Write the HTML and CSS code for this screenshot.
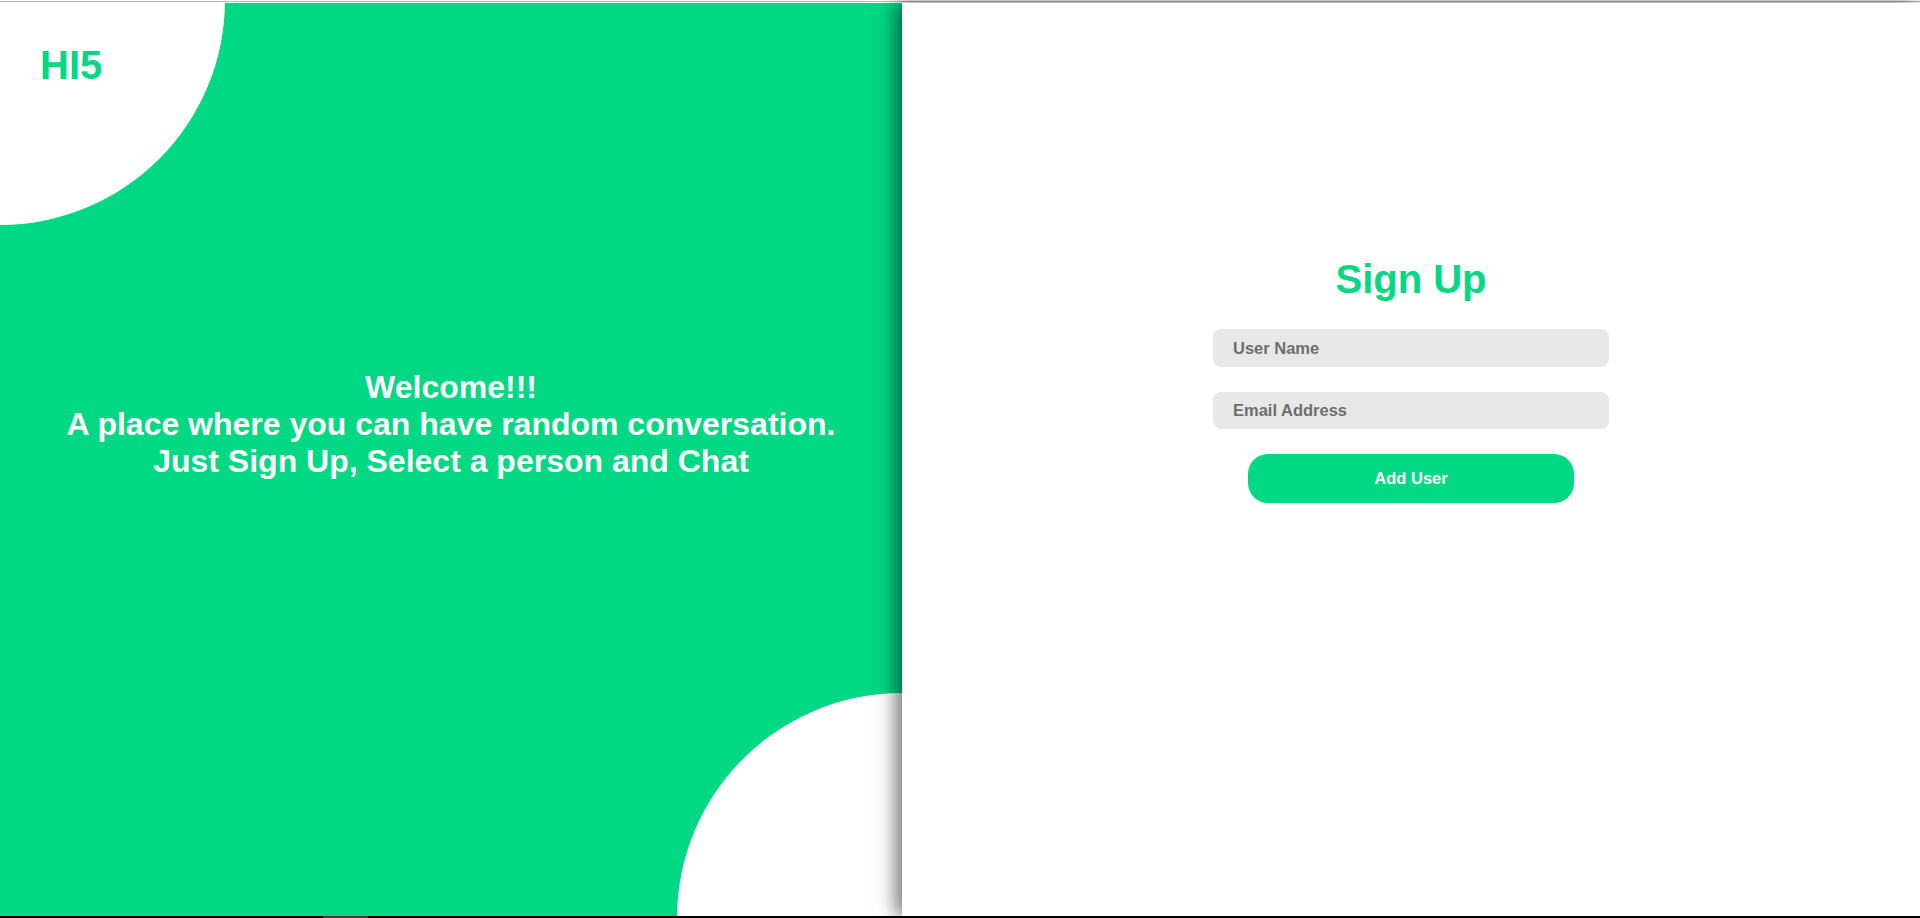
FILE: index.html
```html
<!DOCTYPE html>
<html lang="en">
<head>
<meta charset="utf-8">
<title>HI5 - Sign Up</title>
<link rel="stylesheet" href="styles.css">
</head>
<body>
<div class="topline"></div>
<main class="page">
  <section class="intro">
    <div class="blob blob-top"></div>
    <div class="blob blob-bottom"></div>
    <div class="logo">HI5</div>
    <h1 class="welcome">Welcome!!!<br>A place where you can have random conversation.<br>Just Sign Up, Select a person and Chat</h1>
  </section>
  <section class="signup">
    <h2 class="signup-title">Sign Up</h2>
    <form class="signup-form">
      <input class="field" type="text" placeholder="User Name">
      <input class="field field-email" type="email" placeholder="Email Address">
      <button class="add-btn" type="button">Add User</button>
    </form>
  </section>
</main>
<div class="bottombar"><span class="bar-thumb"></span></div>
</body>
</html>
```

FILE: styles.css
```css
html, body {
  margin: 0;
  padding: 0;
  height: 100%;
}
body {
  font-family: "Liberation Sans", Arial, sans-serif;
  background: #ffffff;
  overflow: hidden;
}
.topline {
  height: 1px;
  margin-top: 1px;
  margin-bottom: 1px;
  background: #b8b8b8;
}
.page {
  display: flex;
  height: 913px;
}
.intro {
  position: relative;
  width: 902px;
  flex: none;
  background: #00d884;
  overflow: hidden;
  display: flex;
  flex-direction: column;
  align-items: stretch;
}
.blob {
  position: absolute;
  width: 450px;
  height: 450px;
  border-radius: 50%;
  background: #ffffff;
}
.blob-top {
  left: -225px;
  top: -228px;
}
.blob-bottom {
  right: -225px;
  bottom: -227px;
}
.logo {
  position: relative;
  margin: 39px 0 0 40px;
  font-size: 40px;
  font-weight: bold;
  color: #00d884;
  line-height: 46px;
}
.welcome {
  position: relative;
  margin: 281px 0 0;
  font-size: 32px;
  font-weight: bold;
  line-height: 36.8px;
  color: #ffffff;
  text-align: center;
}
.signup {
  position: relative;
  z-index: 1;
  flex: 1;
  background: #ffffff;
  box-shadow: -6px 0 18px rgba(0, 0, 0, 0.55);
  display: flex;
  flex-direction: column;
  align-items: center;
}
.signup-title {
  margin: 253px 0 0;
  font-size: 40px;
  font-weight: bold;
  line-height: 46px;
  color: #00d884;
}
.signup-form {
  display: flex;
  flex-direction: column;
  align-items: center;
  margin-top: 27px;
}
.field {
  box-sizing: border-box;
  width: 396px;
  height: 38px;
  border: none;
  border-radius: 8px;
  background: #e7e8e8;
  padding: 0 20px;
  font-family: "Liberation Sans", Arial, sans-serif;
  font-size: 16.5px;
  font-weight: bold;
  color: #555555;
  outline: none;
}
.field::placeholder {
  color: #6e6e6e;
  opacity: 1;
}
.field-email {
  margin-top: 25px;
  height: 37px;
}
.add-btn {
  margin-top: 25px;
  width: 326px;
  height: 49px;
  border: none;
  border-radius: 20px;
  background: #00d884;
  color: #ffffff;
  font-family: "Liberation Sans", Arial, sans-serif;
  font-size: 16.5px;
  font-weight: bold;
  cursor: pointer;
}
.bottombar {
  height: 2px;
  background: #000000;
  display: flex;
}
.bar-thumb {
  margin-left: 323px;
  width: 45px;
  height: 2px;
  background: #3c3c3c;
}
```
